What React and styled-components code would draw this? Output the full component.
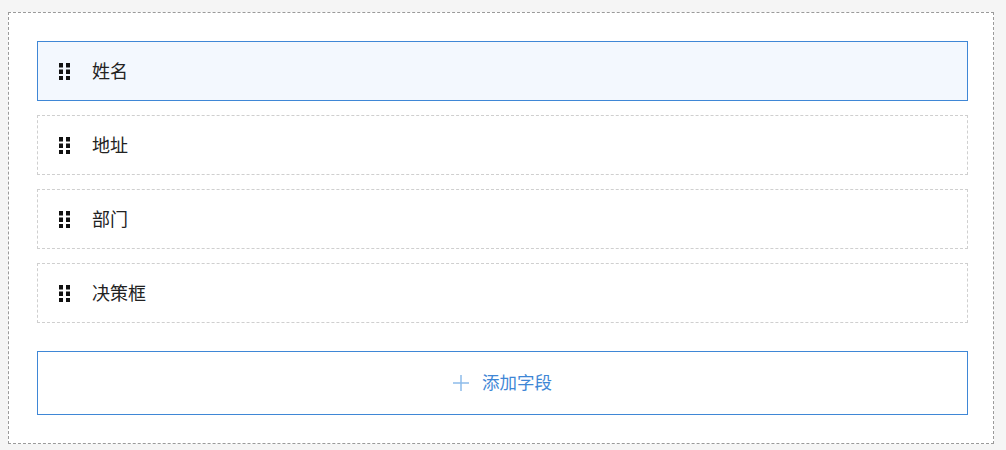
import styled, { createGlobalStyle } from "styled-components";

const GlobalStyle = createGlobalStyle`
    body {
        margin: 0;
        padding: 12px 8px 6px;
        background: #f5f5f5;
        font-family: "Noto Sans CJK SC", "Noto Sans", sans-serif;
    }
`

const fields = [
    { id: 1, label: "姓名", active: true },
    { id: 2, label: "地址" },
    { id: 3, label: "部门" },
    { id: 4, label: "决策框" },
]

function GripIcon () {
    const dots = []
    for (let r = 0; r < 3; r++) {
        for (let c = 0; c < 2; c++) {
            dots.push(<rect key={`${r}-${c}`} x={c * 7} y={r * 6.5} width="4" height="4.5" />)
        }
    }
    return (
        <svg width="11" height="17" viewBox="0 0 11 17" fill="#111">
            {dots}
        </svg>
    )
}

export default function App () {
    return (
        <>
            <GlobalStyle />
            <Board>
                <FieldList>
                    {fields.map(f => (
                        <FieldRow key={f.id} $active={f.active}>
                            <Handle><GripIcon /></Handle>
                            <FieldName>{f.label}</FieldName>
                        </FieldRow>
                    ))}
                </FieldList>
                <AddButton>
                    <svg width="16" height="16" viewBox="0 0 16 16" stroke="#8dbbea" strokeWidth="1.5">
                        <line x1="8" y1="0" x2="8" y2="16" />
                        <line x1="0" y1="8" x2="16" y2="8" />
                    </svg>
                    <ButtonLabel>添加字段</ButtonLabel>
                </AddButton>
            </Board>
        </>
    )
}

const Board = styled.div`
    box-sizing: border-box;
    width: 986px;
    height: 432px;
    border: 1px dashed #9a9a9a;
    background: #fff;
    padding: 28px 25px 28px 28px;
    display: flex;
    flex-direction: column;
`

const FieldList = styled.div`
    display: flex;
    flex-direction: column;
    gap: 14px;
`

const FieldRow = styled.div`
    box-sizing: border-box;
    height: 60px;
    display: flex;
    align-items: center;
    padding-left: 21px;
    border: 1px ${props => props.$active ? "solid #3f87d6" : "dashed #cfcfcf"};
    background: ${props => props.$active ? "#f3f8fe" : "#fff"};
`

const Handle = styled.span`
    display: flex;
    width: 11px;
    margin-right: 22px;
`

const FieldName = styled.span`
    font-size: 18px;
    color: #222;
    line-height: 1;
    padding-bottom: 3px;
`

const AddButton = styled.div`
    box-sizing: border-box;
    margin-top: 28px;
    height: 64px;
    border: 1px solid #3f87d6;
    display: flex;
    align-items: center;
    justify-content: center;
    gap: 13px;
    color: #3f87d6;
    font-size: 17.5px;
    cursor: pointer;
`

const ButtonLabel = styled.span`
    line-height: 1;
    padding-bottom: 3px;
`
